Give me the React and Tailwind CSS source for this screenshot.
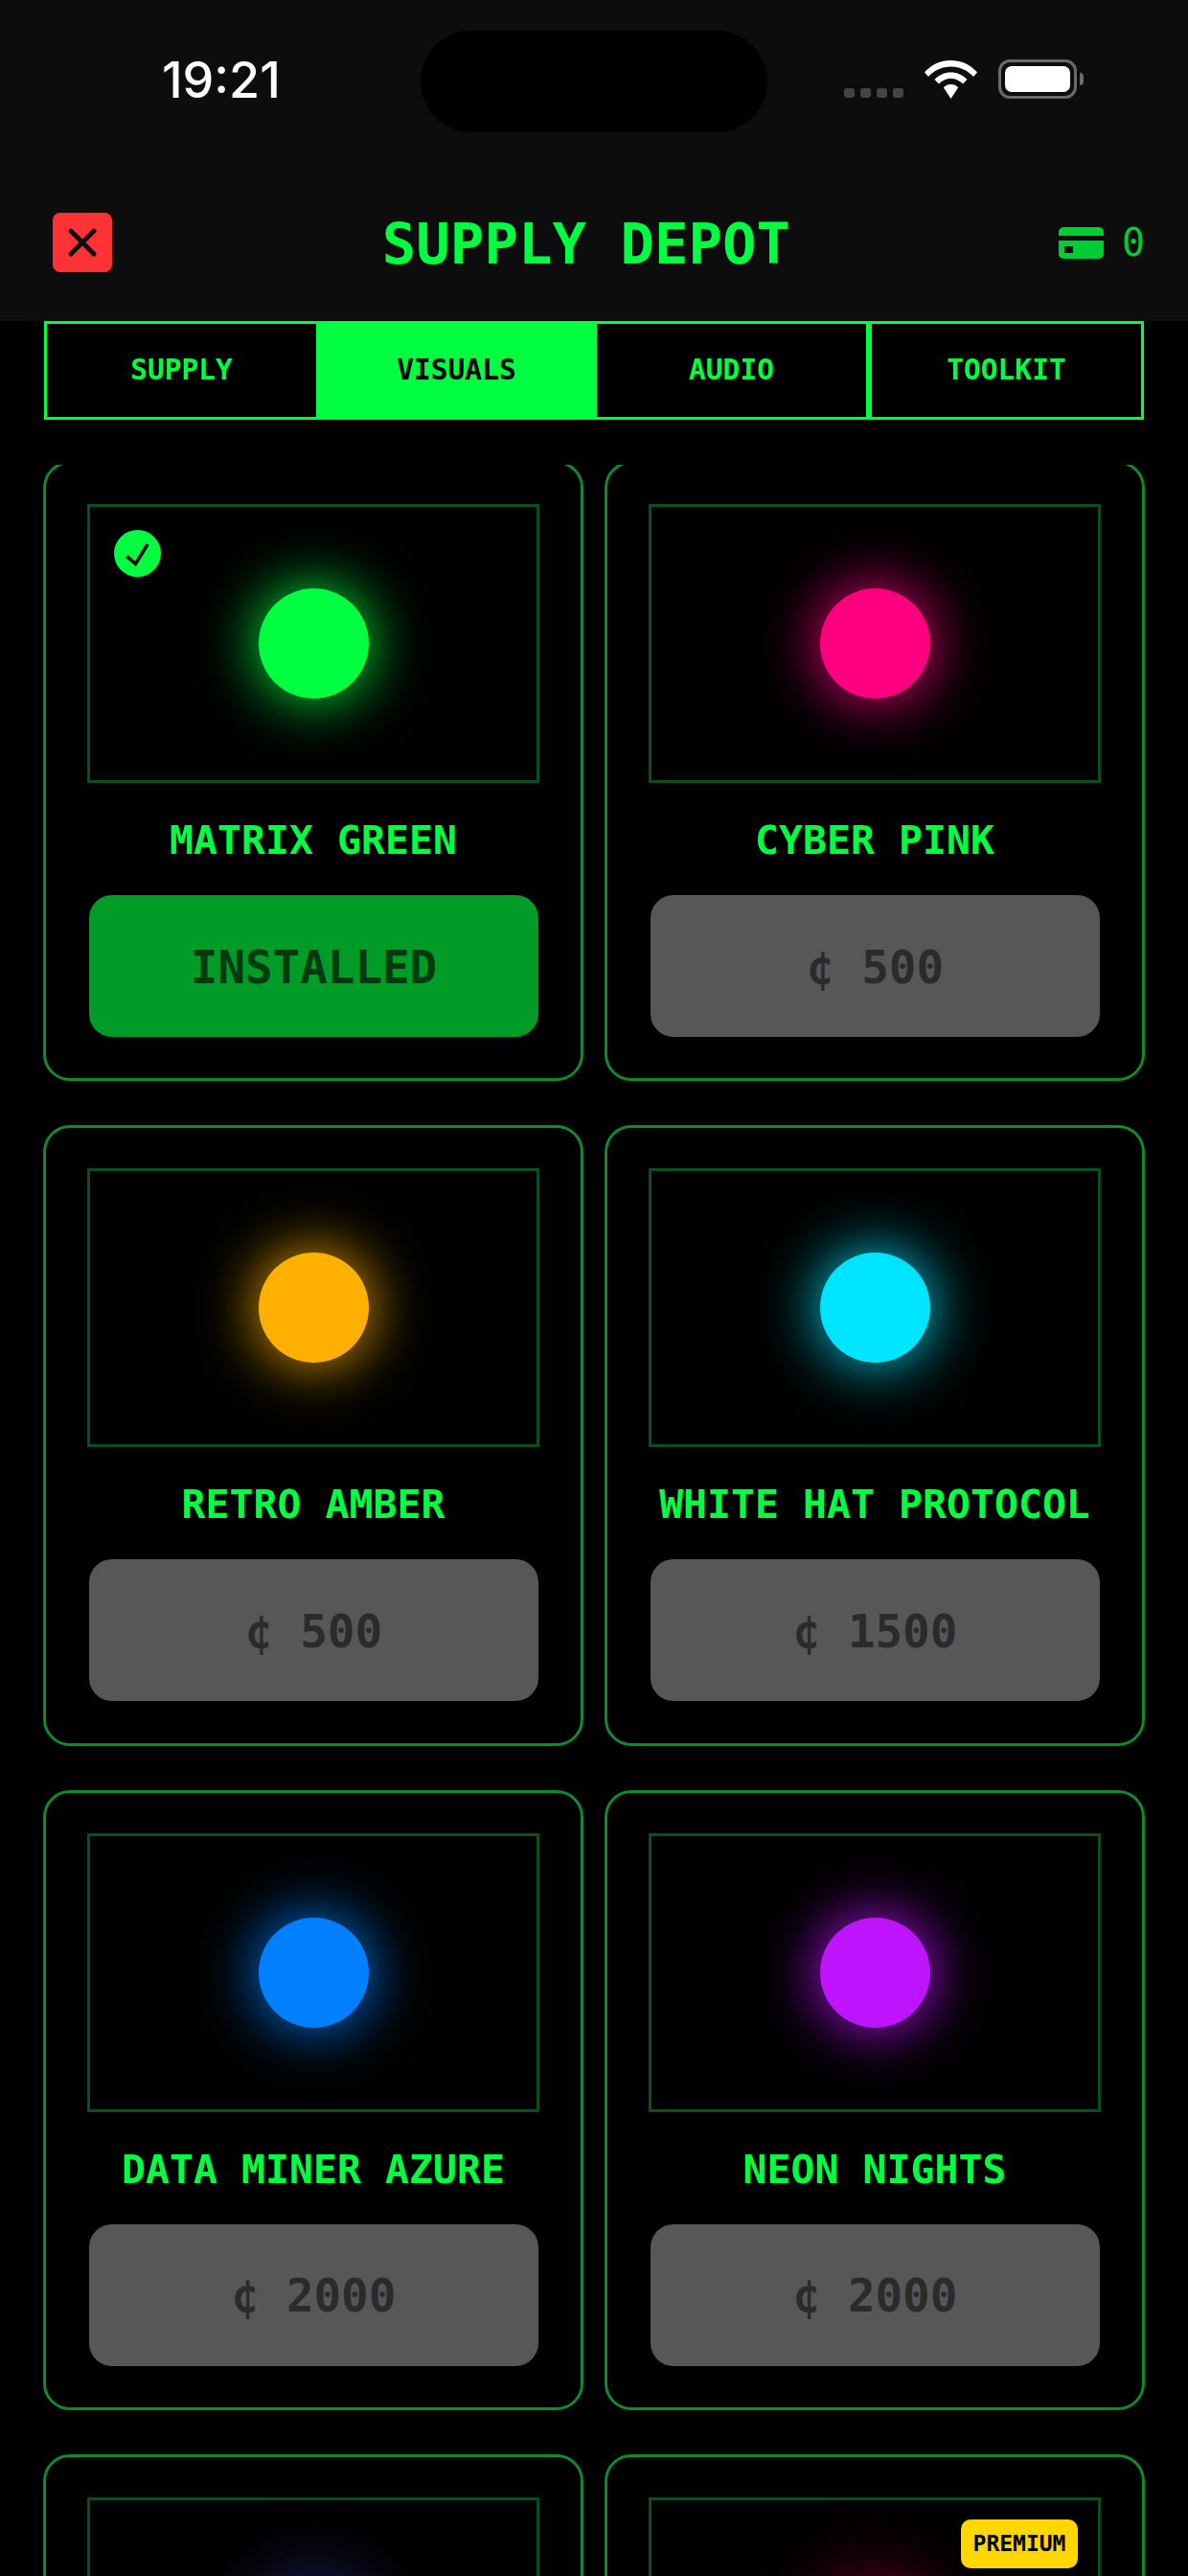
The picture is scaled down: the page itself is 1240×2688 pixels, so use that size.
import { X } from 'lucide-react'

const mono = '[font-family:"DejaVu_Sans_Mono",monospace]'

const tabs = [
  { label: 'SUPPLY' },
  { label: 'VISUALS', active: true },
  { label: 'AUDIO' },
  { label: 'TOOLKIT' },
]

// last row is cut off by the screen, only the top of the card shows
const themes = [
  { id: 'matrix', name: 'MATRIX GREEN', dot: 'bg-[#00ff41] shadow-[0_0_64px_#00ff41]', installed: true },
  { id: 'pink', name: 'CYBER PINK', dot: 'bg-[#ff0080] shadow-[0_0_64px_#ff0080]', price: 500 },
  { id: 'amber', name: 'RETRO AMBER', dot: 'bg-[#ffb000] shadow-[0_0_64px_#ffb000]', price: 500 },
  { id: 'whitehat', name: 'WHITE HAT PROTOCOL', dot: 'bg-[#00e5ff] shadow-[0_0_64px_#00e5ff]', price: 1500 },
  { id: 'azure', name: 'DATA MINER AZURE', dot: 'bg-[#0080ff] shadow-[0_0_64px_#0080ff]', price: 2000 },
  { id: 'neon', name: 'NEON NIGHTS', dot: 'bg-[#bf14ff] shadow-[0_0_64px_#bf14ff]', price: 2000 },
  { id: 'indigo', dot: 'bg-[#2e2e8a] shadow-[0_0_80px_#2e2e8a]' },
  { id: 'crimson', dot: 'bg-[#8b0033] shadow-[0_0_80px_#8b0033]', premium: true },
]

function StatusBar() {
  return (
    <div className="relative flex h-[174px] items-start justify-between pl-[169px] pr-[109px] pt-[58px]">
      <span className="font-['Inter'] text-[52px] font-medium leading-[52px] text-white">19:21</span>
      <div className="absolute left-[439px] top-[32px] h-[106px] w-[362px] rounded-full bg-black" />
      <div className="flex items-end gap-[22px] pt-[4px]">
        <div className="mb-px flex gap-[6px]">
          {[0, 1, 2, 3].map((i) => (
            <span key={i} className="h-[10px] w-[11px] rounded-[3px] bg-[#444]" />
          ))}
        </div>
        <svg width="55" height="40" viewBox="0 0 55 40" fill="#fff">
          <path d="M27.5 0C17 0 7.5 4 0 12.5l4 4.5C10.5 10 18.5 6.5 27.5 6.500S44.500 10 51 17l4-4.500C47.500 4 38 0 27.500 0z" />
          <path d="M27.500 12.500c-6.500 0-12.500 2.500-17 7.500l4.500 4.500c3.300-3.500 7.700-5.500 12.500-5.500s9.200 2 12.500 5.500l4.500-4.500c-4.500-5-10.500-7.500-17-7.500z" />
          <path d="M27.500 25c-3 0-5.700 1.200-7.700 3.300L27.500 40l7.700-11.700C33.200 26.200 30.500 25 27.500 25z" />
        </svg>
        <div className="flex items-center gap-[3px]">
          <div className="h-[41px] w-[82px] rounded-[12px] border-[3px] border-[#6a6a6a] p-[4px]">
            <div className="h-full w-full rounded-[7px] bg-white" />
          </div>
          <div className="h-[13px] w-[4px] rounded-r-full bg-[#6a6a6a]" />
        </div>
      </div>
    </div>
  )
}

function Header() {
  return (
    <header className="bg-[#0d0d0d]">
      <StatusBar />
      <div className="flex h-[161px] items-start justify-between pl-[55px] pr-[45px] pt-[48px]">
        <button className="flex h-[62px] w-[62px] items-center justify-center rounded-[8px] bg-[#ff3333]">
          <X size={48} strokeWidth={2.4} className="text-[#0d0d0d]" />
        </button>
        <h1 className={`${mono} ml-[2px] mt-[2px] text-[59px] font-bold leading-[62px] text-[#00ff41]`}>SUPPLY DEPOT</h1>
        <div className="flex h-[62px] items-center gap-[19px] text-[#00cc33]">
          <svg width="47" height="33" viewBox="0 0 47 33" fill="currentColor">
            <path d="M0 5a5 5 0 0 1 5-5h37a5 5 0 0 1 5 5v4H0zM0 14h47v14a5 5 0 0 1-5 5H5a5 5 0 0 1-5-5zm6 6v7h9v-7z" fillRule="evenodd" />
          </svg>
          <span className={`${mono} text-[40px] leading-none`}>0</span>
        </div>
      </div>
    </header>
  )
}

function Tabs() {
  return (
    <nav className="mx-[46px] flex h-[103px] w-[1148px]">
      {tabs.map((tab) => (
        <button
          key={tab.label}
          className={`${mono} flex-1 border-[3px] border-[#00ff41] text-[29.5px] font-bold ${tab.active ? 'bg-[#00ff41] text-black' : 'bg-black text-[#00ff41]'}`}
        >
          {tab.label}
        </button>
      ))}
    </nav>
  )
}

function ThemeCard({ theme }) {
  return (
    <div className="h-[647.25px] rounded-[28px] border-[3px] border-[#0f8a2f] px-[43px] pt-[42px]">
      <div className="relative flex h-[291px] items-center justify-center border-[3px] border-[#08501c]">
        {theme.installed && (
          <span className="absolute left-[25px] top-[24px] h-[49px] w-[49px] rounded-full bg-[#00ff41]">
            <svg width="49" height="49" viewBox="0 0 49 49" fill="none" stroke="#000" strokeWidth="3.5">
              <path d="M13.400 27.700L22.500 35.300L35 15" />
            </svg>
          </span>
        )}
        {theme.premium && (
          <span className={`${mono} absolute right-[21px] top-[20px] flex h-[51px] w-[122px] items-center justify-center rounded-[10px] bg-[#ffd700] text-[23px] font-bold text-black`}>
            PREMIUM
          </span>
        )}
        <span className={`h-[115px] w-[115px] rounded-full ${theme.dot}`} />
      </div>
      {theme.name && (
        <>
          <p className={`${mono} mt-[38px] text-center text-[41.5px] font-bold leading-[44px] text-[#00ff41]`}>{theme.name}</p>
          <button
            className={`${mono} ml-[2px] mt-[35px] h-[148px] w-[469px] rounded-[24px] pt-[3px] text-[47.5px] font-bold ${theme.installed ? 'bg-[#009c27] text-[#003a0f]' : 'bg-[#575757] text-[#2b2b2b]'}`}
          >
            {theme.installed ? 'INSTALLED' : `¢ ${theme.price}`}
          </button>
        </>
      )}
    </div>
  )
}

export default function App() {
  return (
    <div className="h-[2688px] w-[1240px] overflow-hidden bg-black">
      <Header />
      <Tabs />
      <div className="mt-[47px] h-[2203px] overflow-hidden">
        <div className="-mt-[4px] grid grid-cols-2 gap-x-[22px] gap-y-[46px] px-[45px]">
          {themes.map((theme) => (
            <ThemeCard key={theme.id} theme={theme} />
          ))}
        </div>
      </div>
    </div>
  )
}
